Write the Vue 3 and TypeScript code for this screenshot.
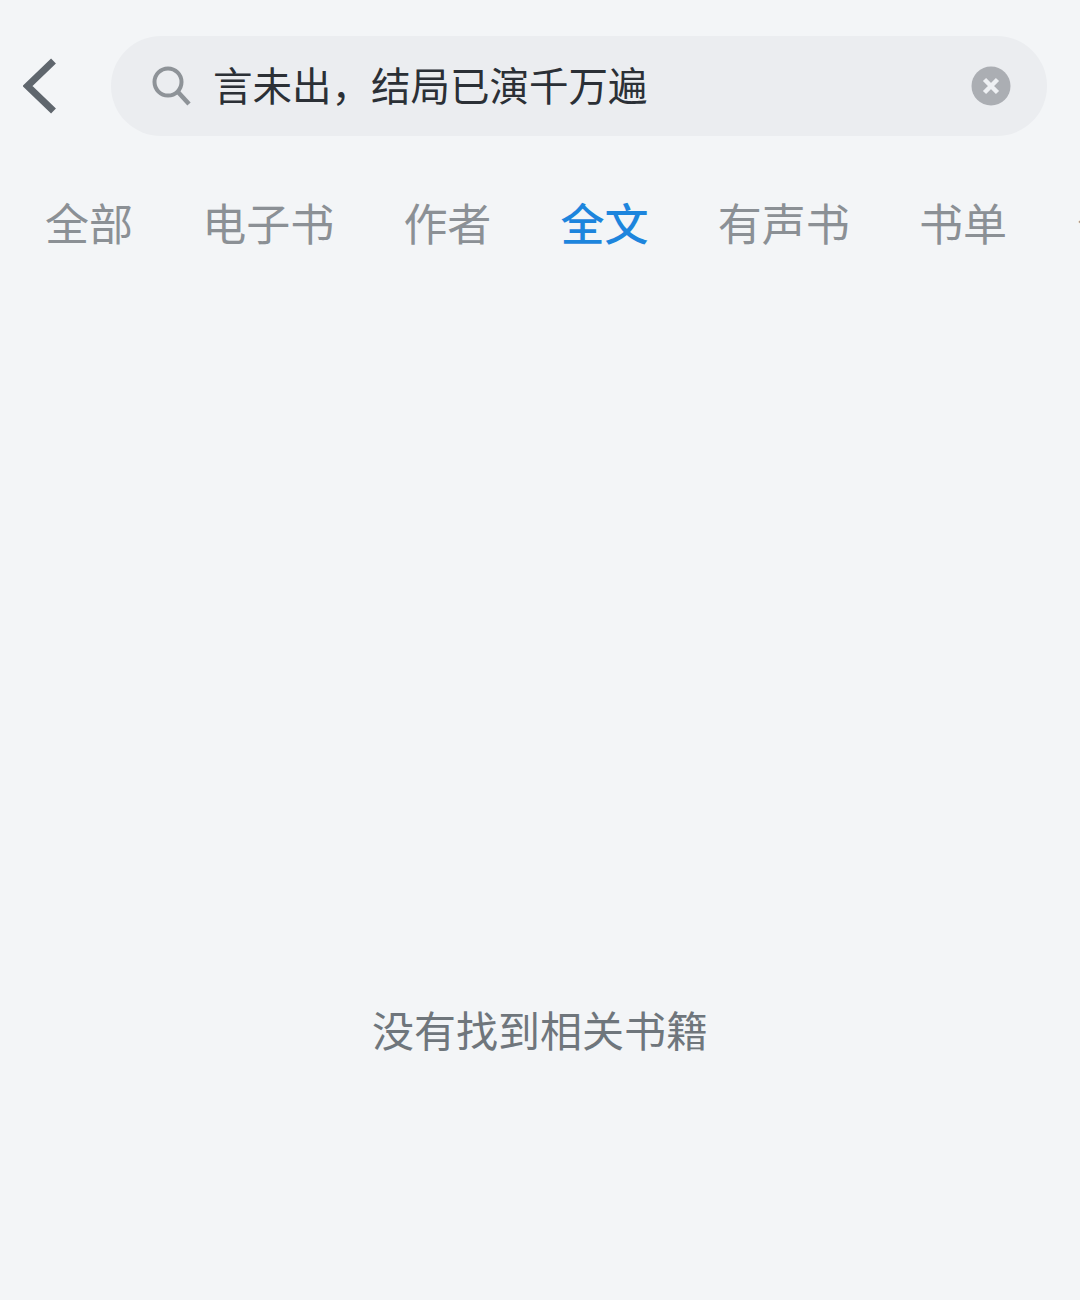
<script setup lang="ts">
const tabs = ['全部', '电子书', '作者', '全文', '有声书', '书单', '公众号']
const activeTab = '全文'
</script>

<template>
  <div class="page">
    <header class="top">
      <svg class="back" width="34" height="56" viewBox="0 0 34 56">
        <path d="M30.5 3 L4.5 28 L30.5 53" fill="none" stroke="#5f666d" stroke-width="7" />
      </svg>
      <div class="search">
        <svg class="lens" width="40" height="40" viewBox="0 0 40 40">
          <circle cx="17" cy="16" r="13.5" fill="none" stroke="#8e9398" stroke-width="4" />
          <path d="M27 26 L38 38" fill="none" stroke="#8e9398" stroke-width="4.5" />
        </svg>
        <span class="query">言未出，结局已演千万遍</span>
        <svg class="clear" width="40" height="40" viewBox="0 0 40 40">
          <circle cx="20" cy="20" r="19.5" fill="#abaeb3" />
          <path d="M13.5 13.5 L26.5 26.5 M26.5 13.5 L13.5 26.5" stroke="#eef0f3" stroke-width="4.5" />
        </svg>
      </div>
    </header>

    <nav class="tabs">
      <span v-for="t in tabs" :key="t" class="tab" :class="{ active: t === activeTab }">{{ t }}</span>
    </nav>

    <p class="empty">没有找到相关书籍</p>
  </div>
</template>

<style>
body {
  background: #f3f5f7;
}
</style>

<style scoped>
.page {
  width: 1080px;
  height: 1300px;
  overflow: hidden;
  background: #f3f5f7;
  font-family: "Liberation Sans", "Noto Sans CJK SC", sans-serif;
}

.top {
  display: flex;
  align-items: center;
  padding: 36px 33px 0 23px;
}

.back {
  flex: none;
  margin-right: 54px;
}

.search {
  flex: 1;
  height: 100px;
  display: flex;
  align-items: center;
  padding: 0 36px 0 40px;
  background: #ebedf0;
  border-radius: 50px;
}

.lens {
  flex: none;
  margin-right: 22px;
}

.query {
  flex: 1;
  margin-bottom: 6px;
  font-size: 39.5px;
  color: #2b3036;
}

.clear {
  flex: none;
}

.tabs {
  display: flex;
  gap: 69.2px;
  padding: 65px 0 0 45px;
  white-space: nowrap;
}

.tab {
  flex: none;
  font-size: 44px;
  line-height: 50px;
  color: #8b9095;
}

.active {
  color: #1d85dd;
  font-weight: 500;
}

.empty {
  margin: 757px 0 0;
  text-align: center;
  font-size: 42px;
  line-height: 50px;
  color: #6f767c;
}
</style>
